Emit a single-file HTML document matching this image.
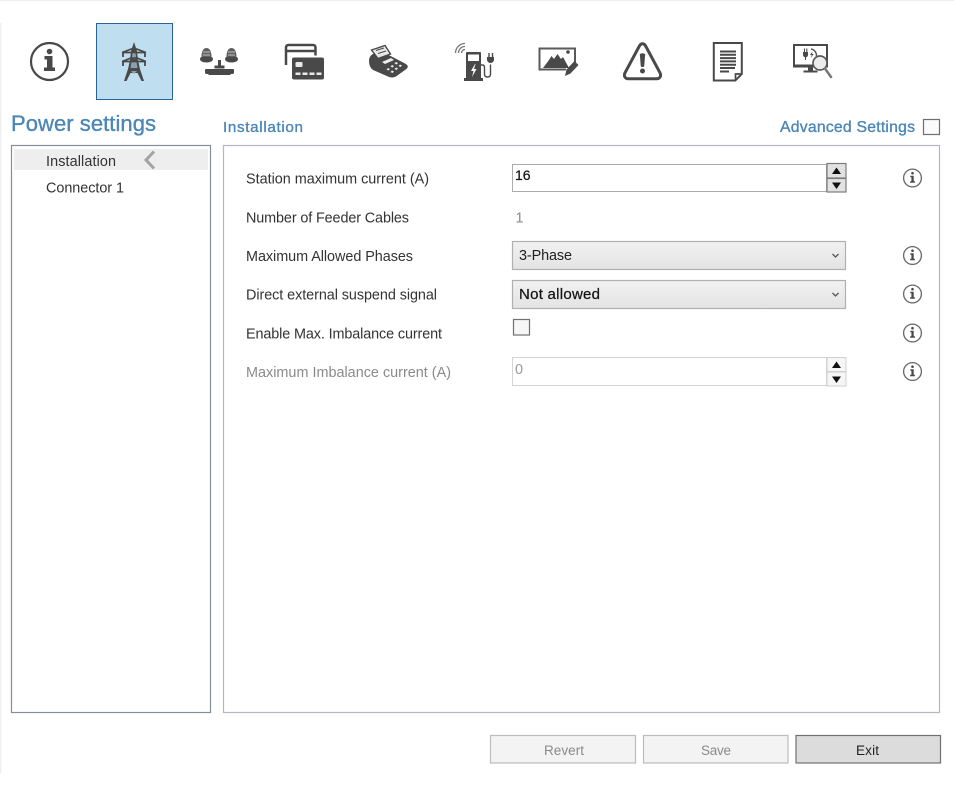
<!DOCTYPE html>
<html>
<head>
<meta charset="utf-8">
<style>
html,body{margin:0;padding:0;background:#fff;width:954px;height:788px;overflow:hidden}
svg{display:block;filter:blur(0.25px)}
text{font-family:"Liberation Sans",sans-serif;font-size:14.4px;fill:#333}
.h{fill:#4b86b6;stroke:#4b86b6;stroke-width:.35px}
.d{fill:#8a8a8a}
.s{stroke:#222;stroke-width:.25px}
</style>
</head>
<body>
<svg width="954" height="788" viewBox="0 0 954 788" xmlns="http://www.w3.org/2000/svg">
<defs>
<filter id="b" x="-10%" y="-10%" width="120%" height="120%"><feGaussianBlur stdDeviation="0.3"/></filter>
<linearGradient id="g" x1="0" y1="0" x2="0" y2="1"><stop offset="0" stop-color="#f1f1f1"/><stop offset="1" stop-color="#e3e3e3"/></linearGradient>
<g id="i">
<circle cx="0" cy="0" r="8.900" fill="none" stroke="#666" stroke-width="1.300"/>
<circle cx="0" cy="-4.800" r="1.300" fill="#4a4a4a"/>
<path d="M-2.200-2.200h3.400v5.400h1.200v1.500h-4.800v-1.500h1.300v-3.900h-1.100z" fill="#4a4a4a"/>
</g>
</defs>
<rect x="0" y="0" width="954" height="1" fill="#eeeeee"/>
<rect x="0" y="23" width="1.500" height="750" fill="#efefef"/>

<!-- tabs -->
<rect x="96.500" y="23.500" width="76" height="76" fill="#bfdff1" stroke="#2a6496" stroke-width="1"/>
<g filter="url(#b)">
<!-- info -->
<circle cx="49.500" cy="61.500" r="18.500" fill="none" stroke="#4a4a4a" stroke-width="2.200"/>
<circle cx="49.500" cy="51.500" r="2.800" fill="#4a4a4a"/>
<path d="M44.500 56h8v11.500h2.500v3.500h-11v-3.500h3v-8h-2.500z" fill="#4a4a4a"/>
<!-- tower -->
<path d="M134 42l3 9 1 9 2 9 4 12h-2.500l-4-8h-7l-4 8h-2.500l4-12 2-9 1-9z" fill="#4a4a4a"/>
<path d="M132.500 52h3l.7 7h-4.400zM131.500 62h5l1 6h-7zM131 71l3 3 3-3z" fill="#8aa0ad"/>
<g fill="none" stroke="#4a4a4a">
<path d="M122 52.500l9.500-3.500h5l9.500 3.500M122 52.500h24M122 61.500l9-3.500h6l9 3.500M122 61.500h24" stroke-width="1.700"/>
<path d="M123 53v4M145 53v4M123 62v4M145 62v4" stroke-width="1.800"/>
</g>
<!-- balance -->
<g fill="#4a4a4a">
<path d="M200 59c0-1.500 1-2 2-2h9c1 0 2 .500 2 2 0 2-2.500 3.500-6.500 3.500s-6.500-1.500-6.500-3.500zM225 59c0-1.500 1-2 2-2h9c1 0 2 .500 2 2 0 2-2.500 3.500-6.500 3.500s-6.500-1.500-6.500-3.500z"/>
<path d="M201.500 57c0-6 2-9 5-9s5 3 5 9zM226.500 57c0-6 2-9 5-9s5 3 5 9z" fill="#5e5e5e"/>
<path d="M203 52h7M203 55h7M228 52h7M228 55h7" stroke="#c4c4c4" stroke-width="1"/>
<rect x="218" y="60" width="3" height="8"/>
<rect x="214.500" y="65.500" width="10" height="3"/>
<path d="M206 69h27c.8 0 1 .500 1 1v2.500c0 .8-.500 1.500-1.500 1.500h-2v1h-22v-1h-2c-1 0-1.500-.700-1.500-1.500v-2.500c0-.500.200-1 1-1z"/>
</g>
<!-- cards -->
<path d="M286 65v-17.500c0-1.500 1-2.500 2.500-2.500h24.500c1.500 0 2.500 1 2.500 2.500v8M286 51h29.500" fill="none" stroke="#4a4a4a" stroke-width="2.500"/>
<rect x="292" y="57.500" width="32" height="22" rx="2" fill="#4a4a4a"/>
<rect x="295.500" y="62" width="7" height="5" rx="1" fill="#e8e8e8"/>
<path d="M295.500 72.500h5v2.500h-5zM302.500 72.500h5v2.500h-5zM309.500 72.500h5v2.500h-5zM316.500 72.500h5v2.500h-5z" fill="#e8e8e8"/>
<!-- terminal -->
<path d="M369 61Q369 55 375 53L381 51L406 64Q410 67 405 70L396 76.500Q392 78.500 388 76.500L373 70Q369 67 369 61z" fill="#4a4a4a"/>
<path d="M371.500 50l13.500-4.500 5.500 8.500-12.500 4.500z" fill="#e8e8e8" stroke="#4a4a4a" stroke-width="1.400"/>
<path d="M376 50.500l8-2.500M378 53.500l8-2.500" stroke="#4a4a4a" stroke-width="1"/>
<path d="M382 62l9-4 3 2-9 4z" fill="#eee"/>
<path d="M396 62l2 1-1.500 1.500-2-1zM400 64.500l2 1-1.500 1.500-2-1zM392 65l2 1-1.500 1.500-2-1zM396 67.500l2 1-1.500 1.500-2-1zM388 68l2 1-1.500 1.500-2-1zM392 70.500l2 1-1.500 1.500-2-1z" fill="#eee"/>
<!-- charger -->
<rect x="466" y="52" width="15" height="27" rx="1" fill="#4a4a4a"/>
<rect x="468" y="54.500" width="11" height="6.500" fill="#fff"/>
<rect x="464" y="78" width="19" height="3" fill="#4a4a4a"/>
<path d="M475 64l-4 7h2.500l-1.500 6 4.500-8h-2.500l1.500-5z" fill="#fff"/>
<path d="M481 65h1.500c1.500 0 2 1 2 2.500v6.500c0 2 1 3 3 3s3-1 3-3v-9.500" fill="none" stroke="#4a4a4a" stroke-width="1.400"/>
<path d="M487 57h7v2.500c0 2-1.500 3.500-3.500 3.500s-3.500-1.500-3.500-3.500z" fill="#4a4a4a"/>
<path d="M489 53v4M492.500 53v4" stroke="#4a4a4a" stroke-width="1.400"/>
<path d="M455.500 53a9.500 9.500 0 0 1 9.500-9.500M458.500 53a6.500 6.500 0 0 1 6.500-6.500M461.500 53a3.500 3.500 0 0 1 3.500-3.500" fill="none" stroke="#777" stroke-width="1.300"/>
<!-- image -->
<path d="M566 69.500h-26.500v-21h35.500v14" fill="none" stroke="#5a5a5a" stroke-width="2"/>
<path d="M543 68l6-8 2.500-4 2.500 3 3.500-5 3.500 5 2-2 6 11z" fill="#4a4a4a"/>
<circle cx="568" cy="52" r="1.800" fill="#4a4a4a"/>
<path d="M565 76l1.500-6.500 8-8.500 4 4-8 8.500z" fill="#4a4a4a"/>
<!-- warning -->
<path d="M642.500 43.800c-1.200 0-2.200.700-3 2l-14.500 27c-1.500 3 0 6 3.500 6h28c3.500 0 5-3 3.500-6l-14.500-27c-.800-1.300-1.800-2-3-2z" fill="none" stroke="#4a4a4a" stroke-width="3"/>
<path d="M639.800 54q2.700-1.500 5.400 0l-1 12.500q-1.700 1-3.400 0z" fill="#4a4a4a"/>
<circle cx="642.500" cy="71" r="2.500" fill="#4a4a4a"/>
<!-- doc -->
<path d="M713.800 43h28v31l-6.500 6.500h-21.500z" fill="#fff" stroke="#4a4a4a" stroke-width="2"/>
<path d="M735.500 80.500v-6.500h6.500" fill="none" stroke="#4a4a4a" stroke-width="1.700"/>
<path d="M720 51.500h16M720 54.800h16M720 58.100h16M720 61.400h16M720 64.700h16M720 68h15M720 71.500h9" stroke="#4a4a4a" stroke-width="2"/>
<!-- monitor -->
<rect x="794" y="45" width="33" height="21" fill="#fff" stroke="#4a4a4a" stroke-width="2"/>
<rect x="793" y="64.500" width="35" height="3" fill="#4a4a4a"/>
<path d="M808 67h5v3.500h4.500v2h-14v-2h4.500z" fill="#4a4a4a"/>
<path d="M803 52h5v3c0 1.200-1.200 2.300-2.500 2.300s-2.500-1.100-2.500-2.300z" fill="#4a4a4a"/>
<path d="M804.500 48.500v3.500M806.800 48.500v3.500M805.500 57v3" stroke="#4a4a4a" stroke-width="1.100"/>
<path d="M811 49a6.500 6.500 0 0 1 4 10.500" fill="none" stroke="#5a5a5a" stroke-width="1.500"/>
<path d="M812.500 51.500l-2.500 3.500h1.700l-1 3 3-4h-1.700z" fill="#4a4a4a"/>
<circle cx="820" cy="63" r="7" fill="#ececec" stroke="#5a5a5a" stroke-width="1.700"/>
<path d="M825 68.500l6 8.500" stroke="#777" stroke-width="2.500" stroke-linecap="round"/>
</g>

<!-- headers -->
<text x="11" y="131" class="h" style="font-size:22px" textLength="145" lengthAdjust="spacing">Power settings</text>
<text x="223" y="132" class="h" style="font-size:15.200px" textLength="80" lengthAdjust="spacing">Installation</text>
<text x="780" y="132" class="h" style="font-size:15.800px" textLength="135" lengthAdjust="spacing">Advanced Settings</text>
<rect x="923.500" y="119.500" width="16" height="15" fill="#fbfbfb" stroke="#6f6f6f" stroke-width="1.200"/>

<!-- left panel -->
<rect x="11.500" y="145.500" width="199" height="567" fill="#fff" stroke="#868c98" stroke-width="1.200"/>
<rect x="14" y="149" width="194" height="21" fill="#eeeeee"/>
<text x="46" y="166" textLength="70" lengthAdjust="spacing">Installation</text>
<text x="46" y="192.500" textLength="78" lengthAdjust="spacing">Connector 1</text>
<path d="M154 151.500l-8 8.500 8 8.500" fill="none" stroke="#a3a3a3" stroke-width="3"/>

<!-- right panel -->
<rect x="223.500" y="145.500" width="716" height="567" fill="#fff" stroke="#b4b6c2" stroke-width="1.200"/>

<text x="246" y="183.500" textLength="183" lengthAdjust="spacing">Station maximum current (A)</text>
<text x="246" y="222.500" textLength="163" lengthAdjust="spacing">Number of Feeder Cables</text>
<text x="246" y="261" textLength="167" lengthAdjust="spacing">Maximum Allowed Phases</text>
<text x="246" y="299.500" textLength="191" lengthAdjust="spacing">Direct external suspend signal</text>
<text x="246" y="338.500" textLength="196" lengthAdjust="spacing">Enable Max. Imbalance current</text>
<text x="246" y="377" class="d" textLength="205" lengthAdjust="spacing">Maximum Imbalance current (A)</text>

<!-- spin 1 -->
<rect x="512.500" y="164.500" width="314" height="27" fill="#fff" stroke="#ababab"/>
<text x="515" y="180" class="s" style="fill:#111;font-size:14px">16</text>
<rect x="827" y="163.500" width="19" height="14.500" fill="#e2e2e2" stroke="#7c7c7c" stroke-width="1.200"/>
<rect x="827" y="178.500" width="19" height="13.500" fill="#e2e2e2" stroke="#7c7c7c" stroke-width="1.200"/>
<path d="M832 174l4.500-6.500 4.500 6.500zM832 182.500h9l-4.500 6.500z" fill="#111"/>

<text x="515.500" y="222.500" class="d">1</text>

<!-- combos -->
<rect x="512.500" y="241.500" width="333" height="28" fill="url(#g)" stroke="#b0b0b0" stroke-width="1.200"/>
<text x="519" y="260" style="fill:#222" textLength="53" lengthAdjust="spacing">3-Phase</text>
<path d="M832.500 254l3 3 3-3" fill="none" stroke="#555" stroke-width="1.300"/>
<rect x="512.500" y="280.500" width="333" height="28" fill="url(#g)" stroke="#b0b0b0" stroke-width="1.200"/>
<text x="519" y="299" class="s" style="fill:#111;font-size:15px" textLength="81" lengthAdjust="spacing">Not allowed</text>
<path d="M832.500 293l3 3 3-3" fill="none" stroke="#555" stroke-width="1.300"/>

<!-- check -->
<rect x="513.500" y="319.500" width="16" height="15.500" fill="#f7f7f7" stroke="#707070" stroke-width="1.200"/>

<!-- spin 2 -->
<rect x="512.500" y="357.500" width="314" height="28" fill="#fff" stroke="#d4d4d4"/>
<text x="515" y="374" style="fill:#999">0</text>
<rect x="827" y="357.500" width="19" height="14" fill="#f6f6f6" stroke="#d0d0d0"/>
<rect x="827" y="372" width="19" height="14" fill="#f6f6f6" stroke="#d0d0d0"/>
<path d="M832 368l4.500-6.500 4.500 6.500zM832 376.500h9l-4.500 6.500z" fill="#111"/>

<!-- info -->
<g filter="url(#b)">
<use href="#i" x="912.500" y="178"/>
<use href="#i" x="912.500" y="255.500"/>
<use href="#i" x="912.500" y="294"/>
<use href="#i" x="912.500" y="333"/>
<use href="#i" x="912.500" y="371.500"/>
</g>

<!-- buttons -->
<rect x="490.500" y="735.500" width="145" height="27.500" fill="#f3f3f3" stroke="#bcbcbc" stroke-width="1.200"/>
<rect x="643.500" y="735.500" width="144.500" height="27.500" fill="#f3f3f3" stroke="#bcbcbc" stroke-width="1.200"/>
<rect x="796" y="735.500" width="144.500" height="27.500" fill="#dcdcdc" stroke="#707070" stroke-width="1.200"/>
<text x="544" y="755" class="d" style="font-size:13.500px" textLength="40" lengthAdjust="spacing">Revert</text>
<text x="701" y="755" class="d" style="font-size:13.500px" textLength="30" lengthAdjust="spacing">Save</text>
<text x="856" y="755" style="fill:#222;font-size:13.500px" textLength="23" lengthAdjust="spacing">Exit</text>
</svg>
</body>
</html>
